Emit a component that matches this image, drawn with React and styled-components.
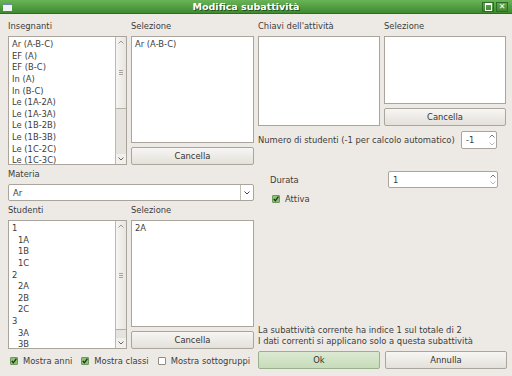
import React from 'react'
import styled, { createGlobalStyle } from 'styled-components'

const Global = createGlobalStyle`
body {
  margin: 0;
  background: #edeae5;
}
#root {
  width: 512px;
  height: 376px;
  overflow: hidden;
}
`

const Window = styled.div`
width: 512px;
height: 376px;
display: flex;
flex-direction: column;
background: #edeae5;
font-family: "DejaVu Sans", "Liberation Sans", sans-serif;
font-size: 8.4px;
color: #3c3c3c;
`

const TitleBar = styled.div`
height: 14px;
flex: none;
display: flex;
align-items: center;
padding: 0 4px 0 3px;
background: linear-gradient(#68b456, #3f8a31);
border-bottom: 1px solid #2f6d25;
box-sizing: border-box;
`
const Title = styled.div`
flex: 1;
text-align: center;
color: #fff;
font-weight: bold;
font-size: 9.5px;
text-shadow: 1px 1px 0 #244f1c;
`
const WinIcon = styled.div`
width: 9px;
height: 8px;
background: #f2f2f2;
border-top: 2px solid #6a88b8;
box-sizing: border-box;
`
const WinButton = styled.div`
width: 12px;
height: 10px;
margin-left: 2px;
border: 1px solid #2f6a26;
background: linear-gradient(#5da94c, #3f8a31);
box-sizing: border-box;
display: flex;
align-items: center;
justify-content: center;
color: #fff;
font-size: 8px;
font-weight: bold;
line-height: 1;
`
const MaxBox = styled.div`
width: 5px;
height: 5px;
border: 1px solid #fff;
border-top-width: 2px;
`

const Body = styled.div`
flex: 1;
display: flex;
gap: 4px;
padding: 7px 6px 7px 8px;
`
const LeftCol = styled.div`
width: 246px;
display: flex;
flex-direction: column;
`
const RightCol = styled.div`
flex: 1;
display: flex;
flex-direction: column;
`
const Pair = styled.div`
display: grid;
grid-template-columns: ${p => p.cols};
column-gap: 4px;
`
const Stack = styled.div`
display: flex;
flex-direction: column;
`
const Label = styled.div`
height: 11px;
line-height: 11px;
margin-bottom: 4px;
`
const Frame = styled.div`
height: ${p => p.h}px;
background: #fff;
border: 1px solid #a9a49c;
box-sizing: border-box;
display: flex;
overflow: hidden;
`
const Items = styled.div`
flex: 1;
padding: 2px 0 0 2px;
`
const Item = styled.div`
height: 11.65px;
line-height: 11.65px;
padding-left: ${p => (p.child ? 7 : 1)}px;
white-space: nowrap;
`
const ScrollBar = styled.div`
width: 10px;
flex: none;
display: flex;
flex-direction: column;
background: #e6e3de;
border-left: 1px solid #bdb8b0;
`
const Thumb = styled.div`
height: ${p => p.h}px;
background: linear-gradient(90deg, #f6f5f3, #e8e5e0);
border-bottom: 1px solid #b4afa7;
display: flex;
flex-direction: column;
align-items: center;
`
const Grip = styled.div`
margin-top: auto;
margin-bottom: auto;
width: 4px;
height: 5px;
border-top: 1px solid #a7a29b;
border-bottom: 1px solid #a7a29b;
position: relative;
box-sizing: border-box;
&::after {
  content: '';
  position: absolute;
  left: 0;
  right: 0;
  top: 1px;
  border-top: 1px solid #a7a29b;
}
`
const ArrowBtn = styled.div`
height: 10px;
flex: none;
display: flex;
align-items: center;
justify-content: center;
background: ${p => (p.clear ? 'transparent' : '#f2f0ed')};
`
const Track = styled.div`
flex: 1;
`
const Button = styled.div`
height: 18px;
margin-top: ${p => (p.flush ? 0 : 4)}px;
box-sizing: border-box;
border: 1px solid ${p => (p.ok ? '#9bb08d' : '#aaa59d')};
border-radius: 2px;
background: ${p => (p.ok ? 'linear-gradient(#dbe9d2, #c7dcb9)' : 'linear-gradient(#f7f6f4, #e4e0da)')};
display: flex;
align-items: center;
justify-content: center;
color: #333;
`
const Combo = styled.div`
height: 17px;
background: #fff;
border: 1px solid #a9a49c;
border-radius: 2px;
box-sizing: border-box;
display: flex;
align-items: center;
margin-bottom: 4px;
`
const ComboText = styled.div`
flex: 1;
padding-left: 4px;
`
const ComboArrow = styled.div`
width: 12px;
height: 100%;
border-left: 1px solid #c4bfb7;
display: flex;
align-items: center;
justify-content: center;
`
const Checks = styled.div`
display: flex;
align-items: center;
height: 13px;
margin-top: 5px;
padding-left: 2px;
white-space: nowrap;
`
const Check = styled.label`
display: flex;
align-items: center;
flex: none;
gap: 5px;
white-space: nowrap;
margin-right: ${p => p.gap || 0}px;
`
const Box = styled.div`
width: 8px;
height: 8px;
flex: none;
box-sizing: border-box;
border: 1px solid ${p => (p.on ? '#6c9a5a' : '#8f8a83')};
background: ${p => (p.on ? '#8cc077' : '#fff')};
border-radius: 1px;
display: flex;
align-items: center;
justify-content: center;
`
const Row = styled.div`
display: flex;
align-items: center;
white-space: nowrap;
height: ${p => p.h}px;
margin-top: ${p => p.mt || 0}px;
padding-left: ${p => p.indent || 0}px;
`
const Spin = styled.div`
width: ${p => p.w}px;
height: ${p => p.h}px;
flex: none;
margin-left: auto;
margin-right: ${p => p.mr || 0}px;
background: #fff;
border: 1px solid #a9a49c;
border-radius: 2px;
box-sizing: border-box;
display: flex;
align-items: center;
`
const SpinText = styled.div`
flex: 1;
padding-left: 4px;
`
const SpinArrows = styled.div`
width: 9px;
height: 100%;
display: flex;
flex-direction: column;
justify-content: space-around;
align-items: center;
`
const Spacer = styled.div`
flex: 1;
`
const Info = styled.div`
line-height: 11px;
margin-bottom: 4px;
white-space: nowrap;
`
const Buttons = styled.div`
display: grid;
grid-template-columns: 122px 122px;
column-gap: 5px;
`

const Up = ({ c = '#777' }) => (
  <svg width="6" height="4" viewBox="0 0 6 4"><path d="M0.5 3.5 L3 1 L5.5 3.5" fill="none" stroke={c} strokeWidth="1" /></svg>
)
const Down = ({ c = '#777' }) => (
  <svg width="6" height="4" viewBox="0 0 6 4"><path d="M0.5 0.5 L3 3 L5.5 0.5" fill="none" stroke={c} strokeWidth="1" /></svg>
)
const Tick = () => (
  <svg width="6" height="6" viewBox="0 0 6 6"><path d="M0.8 3 L2.4 4.8 L5.4 0.6" fill="none" stroke="#1f2f18" strokeWidth="1.3" /></svg>
)

const Scroll = ({ thumb }) => (
  <ScrollBar>
    <Thumb h={thumb}>
      <ArrowBtn clear><Up c="#999" /></ArrowBtn>
      <Grip />
      <ArrowBtn clear />
    </Thumb>
    <Track />
    <ArrowBtn><Down c="#666" /></ArrowBtn>
  </ScrollBar>
)

const teachers = ['Ar (A-B-C)', 'EF (A)', 'EF (B-C)', 'In (A)', 'In (B-C)', 'Le (1A-2A)', 'Le (1A-3A)', 'Le (1B-2B)', 'Le (1B-3B)', 'Le (1C-2C)', 'Le (1C-3C)']
const students = [['1'], ['1A', 1], ['1B', 1], ['1C', 1], ['2'], ['2A', 1], ['2B', 1], ['2C', 1], ['3'], ['3A', 1], ['3B', 1]]

const CheckItem = ({ on, children, gap }) => (
  <Check gap={gap}>
    <Box on={on}>{on && <Tick />}</Box>
    {children}
  </Check>
)

export default function App() {
  return (
    <Window>
      <Global />
      <TitleBar>
        <WinIcon />
        <Title>Modifica subattività</Title>
        <WinButton><MaxBox /></WinButton>
        <WinButton>✕</WinButton>
      </TitleBar>
      <Body>
        <LeftCol>
          <Pair cols="119px 123px">
            <Stack>
              <Label>Insegnanti</Label>
              <Frame h={129}>
                <Items>{teachers.map(t => <Item key={t}>{t}</Item>)}</Items>
                <Scroll thumb={71} />
              </Frame>
            </Stack>
            <Stack>
              <Label>Selezione</Label>
              <Frame h={107}><Items><Item>Ar (A-B-C)</Item></Items></Frame>
              <Button>Cancella</Button>
            </Stack>
          </Pair>
          <Label style={{ marginTop: 4 }}>Materia</Label>
          <Combo>
            <ComboText>Ar</ComboText>
            <ComboArrow><Down c="#444" /></ComboArrow>
          </Combo>
          <Pair cols="119px 123px">
            <Stack>
              <Label>Studenti</Label>
              <Frame h={129}>
                <Items>{students.map(([s, c]) => <Item key={s} child={c}>{s}</Item>)}</Items>
                <Scroll thumb={108} />
              </Frame>
            </Stack>
            <Stack>
              <Label>Selezione</Label>
              <Frame h={107}><Items><Item>2A</Item></Items></Frame>
              <Button>Cancella</Button>
            </Stack>
          </Pair>
          <Checks>
            <CheckItem on gap={9}>Mostra anni</CheckItem>
            <CheckItem on gap={9}>Mostra classi</CheckItem>
            <CheckItem>Mostra sottogruppi</CheckItem>
          </Checks>
        </LeftCol>
        <RightCol>
          <Pair cols="122px 122px">
            <Stack>
              <Label>Chiavi dell'attività</Label>
              <Frame h={90} />
            </Stack>
            <Stack>
              <Label>Selezione</Label>
              <Frame h={68} />
              <Button>Cancella</Button>
            </Stack>
          </Pair>
          <Row h={18} mt={5}>
            Numero di studenti (-1 per calcolo automatico)
            <Spin w={36} h={18} mr={10}>
              <SpinText>-1</SpinText>
              <SpinArrows><Up /><Down c="#bbb" /></SpinArrows>
            </Spin>
          </Row>
          <Row h={17} mt={22} indent={12}>
            Durata
            <Spin w={110} h={17} mr={9}>
              <SpinText>1</SpinText>
              <SpinArrows><Up /><Down c="#bbb" /></SpinArrows>
            </Spin>
          </Row>
          <Row h={13} mt={4} indent={14}>
            <CheckItem on>Attiva</CheckItem>
          </Row>
          <Spacer />
          <Info>
            La subattività corrente ha indice 1 sul totale di 2<br />
            I dati correnti si applicano solo a questa subattività
          </Info>
          <Buttons>
            <Button ok flush>Ok</Button>
            <Button flush>Annulla</Button>
          </Buttons>
        </RightCol>
      </Body>
    </Window>
  )
}
